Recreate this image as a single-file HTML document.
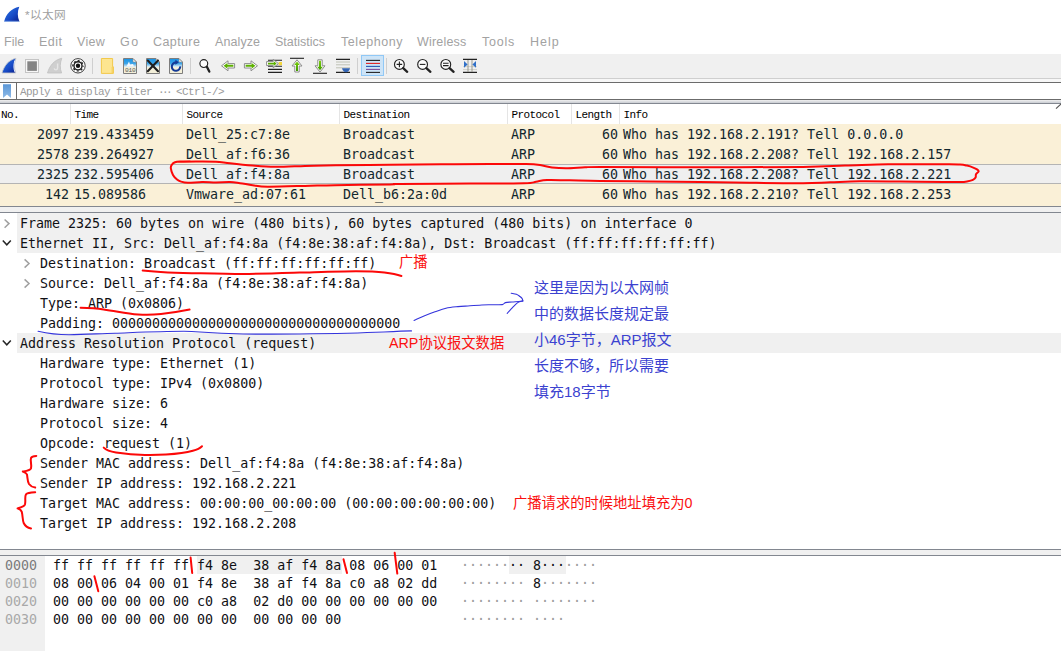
<!DOCTYPE html>
<html lang="zh"><head><meta charset="utf-8"><title>*以太网</title>
<style>
html,body{margin:0;padding:0;background:#fff;}
body{width:1061px;height:651px;position:relative;overflow:hidden;font-family:"Liberation Sans","Noto Sans CJK SC",sans-serif;}
.abs{position:absolute;}
.t{position:absolute;white-space:pre;}
.mono{font-family:"DejaVu Sans Mono","Liberation Mono",monospace;font-size:13.3px;line-height:20px;color:#101014;}
.pl{color:#12272e;}
.hex{font-family:"DejaVu Sans Mono","Liberation Mono",monospace;font-size:13.3px;line-height:18px;color:#101014;}
.menu{font-family:"Liberation Sans",sans-serif;font-size:12.5px;color:#a2a2a2;line-height:23px;top:31px;}
.hd{font-family:"Liberation Mono",monospace;font-size:11px;letter-spacing:-0.6px;color:#000;line-height:20px;top:105px;}
.red{color:#fb1010;font-family:"Liberation Sans","Noto Sans CJK SC",sans-serif;font-size:14.3px;line-height:20px;}
.blue{color:#3b42d0;font-family:"Liberation Sans","Noto Sans CJK SC",sans-serif;font-size:15px;line-height:26px;}
svg{position:absolute;left:0;top:0;}
</style></head><body>

<div class="t" style="left:25px;top:6px;font-size:11.7px;line-height:18px;color:#9e9e9e;letter-spacing:0.4px;font-family:'Liberation Sans','Noto Sans CJK SC',sans-serif">*以太网</div>
<div class="t menu" style="left:4px;letter-spacing:0px">File</div>
<div class="t menu" style="left:39px;letter-spacing:0.5px">Edit</div>
<div class="t menu" style="left:77px;letter-spacing:0.3px">View</div>
<div class="t menu" style="left:120px;letter-spacing:1.5px">Go</div>
<div class="t menu" style="left:153px;letter-spacing:0.4px">Capture</div>
<div class="t menu" style="left:215px;letter-spacing:0.1px">Analyze</div>
<div class="t menu" style="left:275px;letter-spacing:0px">Statistics</div>
<div class="t menu" style="left:341px;letter-spacing:0.55px">Telephony</div>
<div class="t menu" style="left:417px;letter-spacing:0.2px">Wireless</div>
<div class="t menu" style="left:482px;letter-spacing:0.75px">Tools</div>
<div class="t menu" style="left:530px;letter-spacing:1.0px">Help</div>
<div class="abs" style="left:0;top:54px;width:1061px;height:24px;background:#f0f0f0"></div>
<div class="abs" style="left:0;top:78px;width:1061px;height:1px;background:#cfcfcf"></div>
<div class="abs" style="left:0;top:79px;width:1061px;height:3px;background:#f7f7f7"></div>
<div class="abs" style="left:0;top:82px;width:1061px;height:1px;background:#6b6b6b"></div>
<div class="abs" style="left:0;top:99px;width:1061px;height:1px;background:#6b6b6b"></div>
<div class="abs" style="left:16px;top:83px;width:1px;height:16px;background:#6b6b6b"></div>
<div class="abs" style="left:0;top:100px;width:1061px;height:3px;background:linear-gradient(#f0f0f0,#c9ccd2)"></div>
<div class="t" style="left:20px;top:82.6px;line-height:19px;font-family:'Liberation Mono',monospace;font-size:11px;letter-spacing:-0.6px;color:#9a9a9a">Apply a display filter <span style="letter-spacing:-2.6px">···</span> &lt;Ctrl-/&gt;</div>
<div class="abs" style="left:0;top:103px;width:1061px;height:1px;background:#828790"></div>
<div class="abs" style="left:0;top:104px;width:1061px;height:20px;background:#fff"></div>
<div class="abs" style="left:70px;top:104px;width:1px;height:20px;background:#e5e5e5"></div>
<div class="abs" style="left:182px;top:104px;width:1px;height:20px;background:#e5e5e5"></div>
<div class="abs" style="left:339px;top:104px;width:1px;height:20px;background:#e5e5e5"></div>
<div class="abs" style="left:507px;top:104px;width:1px;height:20px;background:#e5e5e5"></div>
<div class="abs" style="left:571px;top:104px;width:1px;height:20px;background:#e5e5e5"></div>
<div class="abs" style="left:619px;top:104px;width:1px;height:20px;background:#e5e5e5"></div>
<div class="t hd" style="left:1px">No.</div>
<div class="t hd" style="left:74.5px">Time</div>
<div class="t hd" style="left:186.5px">Source</div>
<div class="t hd" style="left:343.5px">Destination</div>
<div class="t hd" style="left:511.5px">Protocol</div>
<div class="t hd" style="left:575.5px">Length</div>
<div class="t hd" style="left:623.5px">Info</div>
<div class="abs" style="left:0;top:124px;width:1061px;height:82px;background:#faf0d7"></div>
<div class="abs" style="left:0;top:164px;width:1061px;height:20px;background:#efefef;border-top:1px solid #b4b4b4;border-bottom:1px solid #b4b4b4;box-sizing:border-box"></div>
<div class="t mono pl" style="left:4px;width:65px;text-align:right;top:125px">2097</div>
<div class="t mono pl" style="left:74px;top:125px">219.433459</div>
<div class="t mono pl" style="left:186px;top:125px">Dell_25:c7:8e</div>
<div class="t mono pl" style="left:343px;top:125px">Broadcast</div>
<div class="t mono pl" style="left:511px;top:125px">ARP</div>
<div class="t mono pl" style="left:560px;width:58px;text-align:right;top:125px">60</div>
<div class="t mono pl" style="left:623px;top:125px">Who has 192.168.2.191? Tell 0.0.0.0</div>
<div class="t mono pl" style="left:4px;width:65px;text-align:right;top:145px">2578</div>
<div class="t mono pl" style="left:74px;top:145px">239.264927</div>
<div class="t mono pl" style="left:186px;top:145px">Dell_af:f6:36</div>
<div class="t mono pl" style="left:343px;top:145px">Broadcast</div>
<div class="t mono pl" style="left:511px;top:145px">ARP</div>
<div class="t mono pl" style="left:560px;width:58px;text-align:right;top:145px">60</div>
<div class="t mono pl" style="left:623px;top:145px">Who has 192.168.2.208? Tell 192.168.2.157</div>
<div class="t mono pl" style="left:4px;width:65px;text-align:right;top:165px">2325</div>
<div class="t mono pl" style="left:74px;top:165px">232.595406</div>
<div class="t mono pl" style="left:186px;top:165px">Dell_af:f4:8a</div>
<div class="t mono pl" style="left:343px;top:165px">Broadcast</div>
<div class="t mono pl" style="left:511px;top:165px">ARP</div>
<div class="t mono pl" style="left:560px;width:58px;text-align:right;top:165px">60</div>
<div class="t mono pl" style="left:623px;top:165px">Who has 192.168.2.208? Tell 192.168.2.221</div>
<div class="t mono pl" style="left:4px;width:65px;text-align:right;top:185px">142</div>
<div class="t mono pl" style="left:74px;top:185px">15.089586</div>
<div class="t mono pl" style="left:186px;top:185px">Vmware_ad:07:61</div>
<div class="t mono pl" style="left:343px;top:185px">Dell_b6:2a:0d</div>
<div class="t mono pl" style="left:511px;top:185px">ARP</div>
<div class="t mono pl" style="left:560px;width:58px;text-align:right;top:185px">60</div>
<div class="t mono pl" style="left:623px;top:185px">Who has 192.168.2.210? Tell 192.168.2.253</div>
<div class="abs" style="left:0;top:206px;width:1061px;height:7px;background:#f0f0f0"></div>
<div class="abs" style="left:0;top:206px;width:1061px;height:1px;background:#828790"></div>
<div class="abs" style="left:0;top:212px;width:1061px;height:1px;background:#828790"></div>
<div class="abs" style="left:17px;top:213px;width:1044px;height:20px;background:#f0f0f0"></div>
<div class="t mono" style="left:20px;top:214px">Frame 2325: 60 bytes on wire (480 bits), 60 bytes captured (480 bits) on interface 0</div>
<div class="abs" style="left:17px;top:233px;width:1044px;height:20px;background:#f0f0f0"></div>
<div class="t mono" style="left:20px;top:234px">Ethernet II, Src: Dell_af:f4:8a (f4:8e:38:af:f4:8a), Dst: Broadcast (ff:ff:ff:ff:ff:ff)</div>
<div class="t mono" style="left:40px;top:254px">Destination: Broadcast (ff:ff:ff:ff:ff:ff)</div>
<div class="t mono" style="left:40px;top:274px">Source: Dell_af:f4:8a (f4:8e:38:af:f4:8a)</div>
<div class="t mono" style="left:40px;top:294px">Type: ARP (0x0806)</div>
<div class="t mono" style="left:40px;top:314px">Padding: 000000000000000000000000000000000000</div>
<div class="abs" style="left:17px;top:333px;width:1044px;height:20px;background:#f0f0f0"></div>
<div class="t mono" style="left:20px;top:334px">Address Resolution Protocol (request)</div>
<div class="t mono" style="left:40px;top:354px">Hardware type: Ethernet (1)</div>
<div class="t mono" style="left:40px;top:374px">Protocol type: IPv4 (0x0800)</div>
<div class="t mono" style="left:40px;top:394px">Hardware size: 6</div>
<div class="t mono" style="left:40px;top:414px">Protocol size: 4</div>
<div class="t mono" style="left:40px;top:434px">Opcode: request (1)</div>
<div class="t mono" style="left:40px;top:454px">Sender MAC address: Dell_af:f4:8a (f4:8e:38:af:f4:8a)</div>
<div class="t mono" style="left:40px;top:474px">Sender IP address: 192.168.2.221</div>
<div class="t mono" style="left:40px;top:494px">Target MAC address: 00:00:00_00:00:00 (00:00:00:00:00:00)</div>
<div class="t mono" style="left:40px;top:514px">Target IP address: 192.168.2.208</div>
<div class="abs" style="left:0;top:549px;width:1061px;height:7px;background:#f0f0f0"></div>
<div class="abs" style="left:0;top:549px;width:1061px;height:1px;background:#828790"></div>
<div class="abs" style="left:0;top:555px;width:1061px;height:1px;background:#828790"></div>
<div class="abs" style="left:0;top:556px;width:45px;height:95px;background:#f0f0f0"></div>
<div class="abs" style="left:197px;top:556px;width:145px;height:18px;background:#f0f0f0"></div>
<div class="abs" style="left:509px;top:556px;width:57px;height:18px;background:#f0f0f0"></div>
<div class="t hex" style="left:5px;top:557px;color:#7a7a7a">0000</div>
<div class="t hex" style="left:53px;top:557px">ff ff ff ff ff ff f4 8e  38 af f4 8a 08 06 00 01</div>
<div class="t hex" style="left:461px;top:557px"><span style="color:#9c9c9c">······</span>·· 8···<span style="color:#9c9c9c">····</span></div>
<div class="t hex" style="left:5px;top:575px;color:#a8a8a8">0010</div>
<div class="t hex" style="left:53px;top:575px">08 00 06 04 00 01 f4 8e  38 af f4 8a c0 a8 02 dd</div>
<div class="t hex" style="left:461px;top:575px"><span style="color:#9c9c9c">········ </span>8<span style="color:#9c9c9c">·······</span></div>
<div class="t hex" style="left:5px;top:593px;color:#a8a8a8">0020</div>
<div class="t hex" style="left:53px;top:593px">00 00 00 00 00 00 c0 a8  02 d0 00 00 00 00 00 00</div>
<div class="t hex" style="left:461px;top:593px"><span style="color:#9c9c9c">········ ········</span></div>
<div class="t hex" style="left:5px;top:611px;color:#a8a8a8">0030</div>
<div class="t hex" style="left:53px;top:611px">00 00 00 00 00 00 00 00  00 00 00 00</div>
<div class="t hex" style="left:461px;top:611px"><span style="color:#9c9c9c">········ ····</span></div>
<div class="t red" style="left:399px;top:252px">广播</div>
<div class="t red" style="left:389px;top:333px">ARP协议报文数据</div>
<div class="t red" style="left:513px;top:493px">广播请求的时候地址填充为0</div>
<div class="t blue" style="left:534px;top:275px">这里是因为以太网帧</div>
<div class="t blue" style="left:534px;top:301px">中的数据长度规定最</div>
<div class="t blue" style="left:534px;top:327px">小46字节，ARP报文</div>
<div class="t blue" style="left:534px;top:353px">长度不够，所以需要</div>
<div class="t blue" style="left:534px;top:379px">填充18字节</div>
<svg width="1061" height="651" viewBox="0 0 1061 651">
<defs>
<linearGradient id="fin" x1="0" y1="0" x2="1" y2="1"><stop offset="0" stop-color="#2f7be8"/><stop offset="0.6" stop-color="#1648c4"/><stop offset="1" stop-color="#0a1f8a"/></linearGradient>
<linearGradient id="sky" x1="0" y1="0" x2="0" y2="1"><stop offset="0" stop-color="#1a94e6"/><stop offset="0.55" stop-color="#3aa3e8"/><stop offset="1" stop-color="#eaf2f4"/></linearGradient>
<linearGradient id="bm" x1="0" y1="0" x2="0" y2="1"><stop offset="0" stop-color="#5a96d6"/><stop offset="1" stop-color="#8fbbe8"/></linearGradient>
<linearGradient id="gr" x1="0" y1="0" x2="0" y2="1"><stop offset="0" stop-color="#7ccf10"/><stop offset="1" stop-color="#3f9a00"/></linearGradient>
</defs>
<path d="M4.2 21.4 C6 14 11 8.5 19.3 6.8 C17.3 11.5 17.3 16.5 19.4 21.4 Z" fill="url(#fin)"/>
<path d="M4.2 21.3 L19.4 21.3" stroke="#7fa6e6" stroke-width="0.8"/>
<path d="M2 73 C4 66 8.5 60 16 58.3 C14 63 14 68.5 15.8 73 Z" fill="url(#fin)" stroke="#c9c9c9" stroke-width="0.8"/>
<path d="M14.2 61 C13 65 13.2 69 14.6 72.2 L15.6 72.6 C14 68.5 14 64 15.6 59.2 Z" fill="#e8eef8"/>
<rect x="25.5" y="59.5" width="13" height="13" fill="#f7f7f7" stroke="#c4c4c4" stroke-width="1"/>
<rect x="27.3" y="61.3" width="9.6" height="9.6" fill="#858585"/>
<path d="M47.5 73 C49.5 66 54 60 61.8 58.3 C59.8 63 59.8 68.5 61.6 73 Z" fill="#cfcfcf" stroke="#c0c0c0" stroke-width="0.8"/>
<path d="M57.6 63.4 L57.6 68 C57.6 70.4 54.6 70.4 54.2 68.4" fill="none" stroke="#e6e6e6" stroke-width="1.4"/>
<circle cx="78" cy="65.8" r="7.2" fill="#fff" stroke="#2a2a2a" stroke-width="0.9"/>
<circle cx="78" cy="65.8" r="5.2" fill="none" stroke="#1a1a1a" stroke-width="1.2" stroke-dasharray="2.0 2.084" stroke-dashoffset="1"/>
<circle cx="78" cy="65.8" r="4.05" fill="none" stroke="#1a1a1a" stroke-width="1.4"/>
<circle cx="78" cy="65.8" r="2.2" fill="#111"/>
<path d="M92.5 58 V74" stroke="#cfcfcf" stroke-width="1"/>
<path d="M190.5 58 V74" stroke="#cfcfcf" stroke-width="1"/>
<path d="M357.5 58 V74" stroke="#cfcfcf" stroke-width="1"/>
<path d="M386.5 58 V74" stroke="#cfcfcf" stroke-width="1"/>
<path d="M101.4 58.5 H112.6 V66.8 H113.4 V73.4 H101.4 Z" fill="#fde590" stroke="#f2c94c" stroke-width="1"/>
<path d="M112.2 67 V73" stroke="#f2c94c" stroke-width="0.9"/>
<path d="M123.5 58.5 H133 L136.5 62 V73.5 H123.5 Z" fill="#f3efd9" stroke="#7d7d7d" stroke-width="1"/>
<path d="M124 59 H132.8 L136 62.2 V67 H124 Z" fill="url(#sky)"/>
<path d="M133 58.8 V62 H136.2 Z" fill="#fafafa" stroke="#8a8a8a" stroke-width="0.6"/>
<path d="M126.5 66.5 L129 61.5 L130 64.5 L133 64 L134 66.5 Z" fill="#f4f8fc"/>
<text x="125" y="72.3" font-family="Liberation Mono, monospace" font-size="6.2" fill="#555" letter-spacing="-0.2">010</text>
<path d="M146.5 58.5 H156 L159.5 62 V73.5 H146.5 Z" fill="#f3efd9" stroke="#7d7d7d" stroke-width="1"/>
<path d="M147 59 H155.8 L159 62.2 V67 H147 Z" fill="url(#sky)"/>
<path d="M156 58.8 V62 H159.2 Z" fill="#fafafa" stroke="#8a8a8a" stroke-width="0.6"/>
<path d="M147.8 60.6 L158 71.2 M158 60.6 L147.8 71.2" stroke="#1e1e1e" stroke-width="2.1" stroke-linecap="round"/>
<path d="M169.5 58.5 H179 L182.5 62 V73.5 H169.5 Z" fill="#f3efd9" stroke="#7d7d7d" stroke-width="1"/>
<path d="M170 59 H178.8 L182 62.2 V67 H170 Z" fill="url(#sky)"/>
<path d="M179 58.8 V62 H182.2 Z" fill="#fafafa" stroke="#8a8a8a" stroke-width="0.6"/>
<path d="M180.2 66.3 A4.2 4.2 0 1 1 176 62.4" fill="none" stroke="#143a96" stroke-width="2.1"/>
<path d="M175.4 59.8 L179 62.2 L175.4 64.8 Z" fill="#143a96"/>
<circle cx="203.8" cy="63.6" r="3.9" fill="#fdfdfd" stroke="#222" stroke-width="1.15"/>
<path d="M206.85769000000002 66.65769 L209.3 71.6" stroke="#222" stroke-width="2.3" stroke-linecap="round"/>
<path d="M221.5 65.8 L228 60.8 V63.6 H234.6 V68 H228 V70.8 Z" fill="#fff" stroke="#8c8c8c" stroke-width="1" stroke-linejoin="round"/>
<path d="M223.6 65.8 L227.4 62.9 V64.8 H233.4 V66.8 H227.4 V68.7 Z" fill="#5cb000"/>
<path d="M257.5 65.8 L251 60.8 V63.6 H244.4 V68 H251 V70.8 Z" fill="#fff" stroke="#8c8c8c" stroke-width="1" stroke-linejoin="round"/>
<path d="M255.4 65.8 L251.6 62.9 V64.8 H245.6 V66.8 H251.6 V68.7 Z" fill="#5cb000"/>
<path d="M268 60.3 H282 M268 66.3 H282 M268 69.4 H282 M268 72.4 H282" stroke="#222" stroke-width="1.1"/>
<rect x="278.6" y="62" width="3.4" height="3.2" fill="#f4d63a"/>
<path d="M278.4 63.6 L273.2 59.4 V61.6 H266.6 V65.6 H273.2 V67.8 Z" fill="#fff" stroke="#8c8c8c" stroke-width="1" stroke-linejoin="round"/>
<path d="M276.6 63.6 L273.8 61.3 V62.7 H268 V64.5 H273.8 V65.9 Z" fill="#5cb000"/>
<path d="M290 58.3 H304" stroke="#222" stroke-width="1.1"/>
<path d="M297 59.8 L292 66 H294.8 V72 H299.2 V66 H302 Z" fill="#fff" stroke="#8c8c8c" stroke-width="1" stroke-linejoin="round"/>
<path d="M297 61.6 L294.2 65.1 H296 V71 H298 V65.1 H299.8 Z" fill="url(#gr)"/>
<path d="M313 73.3 H327" stroke="#222" stroke-width="1.1"/>
<path d="M320 72 L315 65.8 H317.8 V59.8 H322.2 V65.8 H325 Z" fill="#fff" stroke="#8c8c8c" stroke-width="1" stroke-linejoin="round"/>
<path d="M320 70.2 L317.2 66.7 H319 V60.8 H321 V66.7 H322.8 Z" fill="url(#gr)"/>
<path d="M336 59.4 H350 M336 72.4 H350" stroke="#222" stroke-width="1.1"/>
<path d="M336 62 H350 M336 64.8 H350 M336 67.8 H350" stroke="#b9bcae" stroke-width="0.9"/>
<path d="M342 68.2 H350 C349.4 71 347.6 72.2 346 72.2 C344.4 72.2 342.6 71 342 68.2 Z" fill="#3465b4"/>
<rect x="361.5" y="55.5" width="22" height="20" fill="#cde4f7" stroke="#90c8f6" stroke-width="1"/>
<path d="M366 60.4 H380" stroke="#222" stroke-width="1.1"/>
<path d="M366 63.4 H380" stroke="#e02020" stroke-width="1.1"/>
<path d="M366 66.4 H380" stroke="#2858b0" stroke-width="1.1"/>
<path d="M366 69.4 H380" stroke="#7b4a9a" stroke-width="1.1"/>
<path d="M366 72.4 H380" stroke="#222" stroke-width="1.1"/>
<circle cx="399.4" cy="64.4" r="4.9" fill="#fdfdfd" stroke="#222" stroke-width="1.15"/>
<path d="M403.16479 68.16479 L407.2 71.8" stroke="#222" stroke-width="2.3" stroke-linecap="round"/>
<path d="M396.6 64.4 H402.2 M399.4 61.6 V67.2" stroke="#222" stroke-width="1.1"/>
<circle cx="422.6" cy="64.4" r="4.9" fill="#fdfdfd" stroke="#222" stroke-width="1.15"/>
<path d="M426.36479 68.16479 L430.4 71.8" stroke="#222" stroke-width="2.3" stroke-linecap="round"/>
<path d="M419.8 64.4 H425.4" stroke="#222" stroke-width="1.1"/>
<circle cx="445.8" cy="64.4" r="4.9" fill="#fdfdfd" stroke="#222" stroke-width="1.15"/>
<path d="M449.56479 68.16479 L453.6 71.8" stroke="#222" stroke-width="2.3" stroke-linecap="round"/>
<path d="M443 63.2 H448.6 M443 65.6 H448.6" stroke="#222" stroke-width="1.1"/>
<path d="M463 59.4 H477 M463 72.4 H477" stroke="#222" stroke-width="1.1"/>
<path d="M463 66.6 H477 M463 69.6 H477" stroke="#c9c9c0" stroke-width="0.8"/>
<path d="M468 60 V72 M472 60 V72" stroke="#9a9a8e" stroke-width="1"/>
<path d="M464 61 L467.6 64.4 L464 67.8 Z M476 61 L472.4 64.4 L476 67.8 Z" fill="#3070c8"/>
<path d="M3 84.2 H11 V98 L7 94.6 L3 98 Z" fill="url(#bm)"/>
<path d="M1056 108.6 L1061.5 103.6" fill="none" stroke="#555" stroke-width="1.2"/>
<path d="M4.6 219.5 L9.0 223.6 L4.6 227.7" fill="none" stroke="#a0a0a0" stroke-width="1.5"/>
<path d="M2.8 240.4 L6.8 244.79999999999998 L10.8 240.4" fill="none" stroke="#262626" stroke-width="1.5"/>
<path d="M24.6 259.4 L29.0 263.5 L24.6 267.6" fill="none" stroke="#a0a0a0" stroke-width="1.5"/>
<path d="M24.6 279.4 L29.0 283.5 L24.6 287.6" fill="none" stroke="#a0a0a0" stroke-width="1.5"/>
<path d="M2.8 340.40000000000003 L6.8 344.8 L10.8 340.40000000000003" fill="none" stroke="#262626" stroke-width="1.5"/>
<path fill="none" stroke="#fc0808" stroke-width="2" stroke-linecap="round" stroke-linejoin="round" d="M177.0 161.7 C180.2 161.7 189.5 161.5 196.0 161.5 C202.5 161.5 210.3 161.4 216.0 161.7 C221.7 162.0 223.9 162.7 230.0 163.3 C236.1 164.0 245.1 165.0 252.6 165.6 C260.1 166.2 266.3 166.8 275.0 166.8 C283.7 166.9 294.9 166.2 305.0 165.9 C315.1 165.7 321.4 165.5 335.6 165.3 C349.8 165.1 372.4 165.0 390.0 164.8 C407.6 164.6 424.3 164.4 441.0 164.3 C457.7 164.2 475.8 164.2 490.0 164.1 C504.2 164.0 517.7 163.8 526.0 164.0 C534.3 164.2 535.7 164.4 540.0 165.0 C544.3 165.6 547.7 166.9 552.0 167.4 C556.3 167.9 560.5 168.2 566.0 168.2 C571.5 168.2 579.3 167.5 585.0 167.3 C590.7 167.1 580.8 167.0 600.0 167.0 C619.2 167.0 666.2 167.3 700.0 167.3 C733.8 167.3 778.8 167.2 803.0 166.9 C827.2 166.6 830.8 166.0 845.0 165.6 C859.2 165.2 875.5 164.5 888.0 164.3 C900.5 164.1 910.7 164.2 920.0 164.2 C929.3 164.2 937.3 164.2 944.0 164.3 C950.7 164.4 956.2 164.4 960.0 164.6 C963.8 164.8 964.7 165.1 967.0 165.6 C969.3 166.1 972.1 167.1 973.8 167.8 C975.5 168.5 976.6 169.0 977.4 169.6 C978.2 170.2 978.8 170.7 978.6 171.5 C978.4 172.3 976.5 173.3 976.0 174.3 C975.5 175.3 976.1 176.6 975.6 177.5 C975.1 178.4 974.3 179.2 972.9 179.8 C971.5 180.5 969.1 181.0 967.0 181.4 C964.9 181.8 963.8 181.9 960.0 182.0 C956.2 182.1 954.0 182.0 944.0 181.9 C934.0 181.8 914.1 181.6 900.0 181.5 C885.9 181.4 871.3 181.2 859.6 181.3 C847.9 181.4 839.4 182.0 830.0 182.3 C820.6 182.6 816.3 183.1 803.0 183.2 C789.7 183.3 767.2 183.0 750.0 182.8 C732.8 182.6 716.7 182.2 700.0 182.0 C683.3 181.8 666.7 181.6 650.0 181.4 C633.3 181.2 613.3 181.2 600.0 181.0 C586.7 180.8 578.8 180.5 570.0 180.3 C561.2 180.1 552.7 179.8 547.0 180.0 C541.3 180.2 539.8 181.2 536.0 181.8 C532.2 182.4 535.0 183.0 524.0 183.3 C513.0 183.6 490.7 183.5 470.0 183.6 C449.3 183.7 413.3 183.8 400.0 183.9 C386.7 184.0 400.8 184.2 390.0 184.4 C379.2 184.6 349.2 184.9 335.0 185.2 C320.8 185.4 316.2 185.7 305.0 185.9 C293.8 186.2 276.4 186.8 267.7 186.7 C259.0 186.6 257.2 185.8 252.6 185.2 C248.0 184.6 243.8 183.7 240.0 183.2 C236.2 182.7 234.0 182.2 230.0 182.1 C226.0 182.0 220.7 182.4 216.0 182.4 C211.3 182.4 206.7 181.8 202.0 181.9 C197.3 182.0 191.5 182.9 188.0 182.8 C184.5 182.8 182.8 182.2 181.0 181.6 C179.2 181.0 178.3 180.6 177.0 179.5 C175.7 178.4 174.0 176.9 173.0 175.0 C172.0 173.1 171.0 169.9 170.8 168.2 C170.6 166.4 171.3 165.5 172.0 164.5 C172.7 163.5 173.7 162.8 175.0 162.3 C176.3 161.8 177.5 161.7 180.0 161.6 C182.5 161.5 188.3 161.5 190.0 161.5"/>
<path fill="none" stroke="#fc0808" stroke-width="2" stroke-linecap="round" stroke-linejoin="round" d="M142.7 270.4 C160 272.4 180 273 200.7 273.2 C215 273.6 230 274 243 274 C262 273.8 280 273.2 299.6 272.6 C320 272 340 271.2 356 271.2 C368 271.2 377 271.6 384.4 272.6 C392 273.6 397 274.6 401.4 276"/>
<path fill="none" stroke="#fc0808" stroke-width="2" stroke-linecap="round" stroke-linejoin="round" d="M80.6 307.8 C88 308 96 308.4 103.7 309.4 C116 311 126 313.6 138 314.5 C146 315 154 314.8 161 314 C171 313 180 311.6 189.6 309.6"/>
<path fill="none" stroke="#fc0808" stroke-width="2" stroke-linecap="round" stroke-linejoin="round" d="M103.7 447.6 C106 450 110 451.6 116 452.4 C126 454 135 454.8 145 454.9 C152 455 159 454.9 166 454.5 C176 453.8 186 452.6 192.8 450.7 C197 449.6 200 448.2 202 446.2"/>
<path fill="none" stroke="#fc0808" stroke-width="2" stroke-linecap="round" stroke-linejoin="round" d="M36.3 455.9 C33.5 456 31.6 456.6 31 458 C30 461 32 465 31 468.4 C30 470.6 26 471 22.8 471.5 C25 472.4 26.6 473 27 474.6 C27.6 478 27.4 481.6 29 484 C30.4 486 32.6 487.2 35.2 487.6"/>
<path fill="none" stroke="#fc0808" stroke-width="2" stroke-linecap="round" stroke-linejoin="round" d="M35.2 492.2 C31.6 492.4 27.4 492.6 26 494.3 C24.4 497 26 501.6 24.9 504.6 C24 506.8 20.6 507.6 17.6 508.4 C19.6 509.2 21.2 510.2 21.8 511.9 C22.8 515.6 22.4 520 23.8 523.3 C25.2 526.2 28 527.8 31 528.5"/>
<path fill="none" stroke="#fc0808" stroke-width="2" stroke-linecap="round" stroke-linejoin="round" d="M190.6 557.6 L192.2 573"/>
<path fill="none" stroke="#fc0808" stroke-width="2" stroke-linecap="round" stroke-linejoin="round" d="M343.5 559.2 L347 573"/>
<path fill="none" stroke="#fc0808" stroke-width="2" stroke-linecap="round" stroke-linejoin="round" d="M394.7 552.8 L397.3 573.6"/>
<path fill="none" stroke="#fc0808" stroke-width="2" stroke-linecap="round" stroke-linejoin="round" d="M94.4 576.2 L98.3 591.3"/>
<path fill="none" stroke="#3434dc" stroke-width="1.1" stroke-linecap="round" stroke-linejoin="round" d="M38 331.3 C48 333.6 58 334.8 69 334.8 C85 334.6 100 333.6 115 333.2 C138 332.4 160 331.4 184 331.3 C190 331.3 195 331.6 200 332 C215 333.2 228 333.8 243 334 C262 334.2 280 334.2 300 334 C330 333.6 360 333 384 332 C394 331.5 404 331 411.5 330.9"/>
<path fill="none" stroke="#3434dc" stroke-width="1.1" stroke-linecap="round" stroke-linejoin="round" d="M414.0 320.4 C415.7 319.7 420.5 317.4 424.0 316.0 C427.5 314.6 431.3 313.1 435.0 311.8 C438.7 310.5 442.2 309.1 446.0 308.2 C449.8 307.3 454.0 307.0 458.0 306.6 C462.0 306.2 466.0 306.1 470.0 305.8 C474.0 305.5 478.1 305.2 481.8 305.0 C485.5 304.8 488.6 304.8 492.0 304.7 C495.4 304.6 500.1 305.0 502.3 304.6 C504.5 304.2 503.8 303.0 505.4 302.6 C507.0 302.2 509.8 302.2 512.0 302.0 C514.2 301.8 517.1 301.7 518.9 301.5 C520.7 301.3 522.0 301.0 522.6 300.9"/>
<path fill="none" stroke="#3434dc" stroke-width="1.1" stroke-linecap="round" stroke-linejoin="round" d="M511.2 293.2 C512.1 293.4 515.0 293.7 516.4 294.2 C517.8 294.7 518.6 295.5 519.5 296.2 C520.4 296.9 521.4 297.6 522.0 298.4 C522.6 299.2 522.8 300.6 522.9 301.0"/>
<path fill="none" stroke="#3434dc" stroke-width="1.1" stroke-linecap="round" stroke-linejoin="round" d="M522.9 301.0 C522.0 301.3 519.4 301.5 517.7 302.6 C516.0 303.7 514.2 305.8 512.5 307.6 C510.8 309.4 508.1 312.4 507.2 313.3"/>
</svg>
</body></html>
